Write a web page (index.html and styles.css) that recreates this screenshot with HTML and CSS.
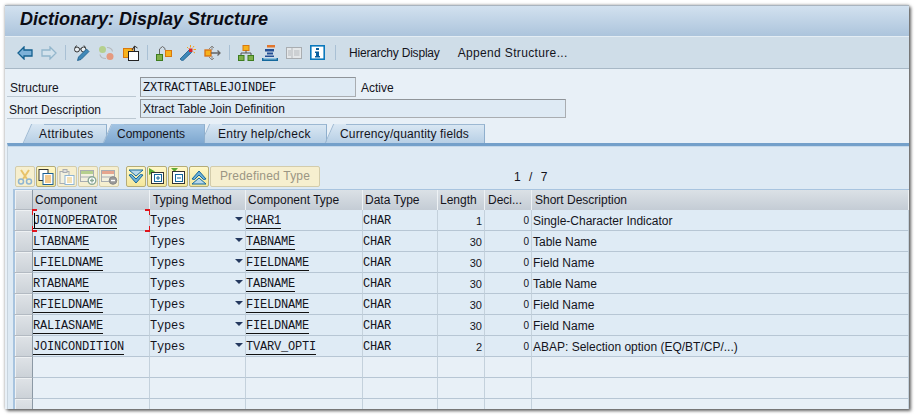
FILE: index.html
```html
<!DOCTYPE html>
<html lang="en">
<head>
  <meta charset="UTF-8" />
  <title>Dictionary: Display Structure</title>
  <link rel="stylesheet" href="styles.css">
</head>
<body>
  <div class="window">
    <div class="titlebar">Dictionary: Display Structure</div>

    <div class="toolbar">
      <svg class="tb-icon first" width="16" height="14" viewBox="0 0 16 14"><path d="M7 1 1 7l6 6V10h8V4H7z" fill="#7db1d8" stroke="#14608f" stroke-width="1.3"/></svg>
      <svg class="tb-icon" width="16" height="14" viewBox="0 0 16 14"><path d="M9 1l6 6-6 6V10H1V4h8z" fill="#d3e2ec" stroke="#93b6cc" stroke-width="1.3"/></svg>
      <span class="sep"></span>
      <svg class="tb-icon" width="16" height="16" viewBox="0 0 16 16"><circle cx="3" cy="4.500" r="2.500" fill="#e8eef2" stroke="#333"/><circle cx="9.500" cy="4.500" r="2.500" fill="#e8eef2" stroke="#333"/><path d="M5.500 4h1.500M1 2.500 2.500 .5M11.500 2.500 10 .5" stroke="#333" fill="none"/><path d="M3.500 15.500l1-3.500 8-8 2.500 2.500-8 8z" fill="#3f88b8" stroke="#1b5b88" stroke-width=".8"/></svg>
      <svg class="tb-icon" width="17" height="16" viewBox="0 0 17 16"><circle cx="4.500" cy="4.500" r="3.500" fill="#b5d08e"/><circle cx="12" cy="11.500" r="3.500" fill="#e59a80"/><path d="M9 2.500c3 0 5 1 5.500 4M8 13.500c-3 0-5.500-1-6-4" fill="none" stroke="#b5b9bd" stroke-width="1.200"/></svg>
      <svg class="tb-icon" width="16" height="16" viewBox="0 0 16 16"><rect x=".5" y="3.500" width="9.500" height="9" fill="#f6b21c" stroke="#d9780f"/><rect x="5.500" y="6.500" width="10" height="9" fill="#fff" stroke="#222"/><path d="M9 5l2.500-4 3 2M11.500 1v5" fill="none" stroke="#333"/></svg>
      <span class="sep"></span>
      <svg class="tb-icon" width="16" height="16" viewBox="0 0 16 16"><rect x=".5" y="9.500" width="6" height="6" fill="#7fb04a" stroke="#3e7d1f"/><rect x="9.500" y="5.500" width="6" height="6" fill="#f6b21c" stroke="#d9780f"/><path d="M3.500 9V4l3-2.500L9 3.500V5" fill="none" stroke="#666"/></svg>
      <svg class="tb-icon" width="16" height="16" viewBox="0 0 16 16"><path d="M0 14 9 5l2.500 2.500-9 8.500z" fill="#3f88b8" stroke="#1b5b88" stroke-width=".8"/><rect x="9" y="3.500" width="3.500" height="3.500" fill="#d8232a"/><path d="M10.500 0v2.500M14 1l-1 1.500M16 4.500h-2.500M15 8l-1.500-1M7 2l1.500 1.500" stroke="#f3a01b"/></svg>
      <svg class="tb-icon" width="17" height="16" viewBox="0 0 17 16"><rect x="1" y="5" width="6" height="6" fill="#f6b21c" stroke="#d96f0f" stroke-width="1.300"/><path d="M7 8h9M13.500 5.500 16 8l-2.500 2.500" fill="none" stroke="#666" stroke-width="1.300"/><path d="M5 4 8 1l2 2M5 12l3 3 2-2M8 1v4M8 15v-4" fill="none" stroke="#888"/></svg>
      <span class="sep"></span>
      <svg class="tb-icon" width="16" height="16" viewBox="0 0 16 16"><rect x="5" y=".5" width="6" height="5" fill="#f6b21c" stroke="#d9780f"/><path d="M8 5.500V8M3 10V8h10v2" fill="none" stroke="#555"/><rect x=".5" y="10.500" width="5.500" height="5" fill="#7fb04a" stroke="#3e7d1f"/><rect x="10" y="10.500" width="5.500" height="5" fill="#7fb04a" stroke="#3e7d1f"/></svg>
      <svg class="tb-icon" width="16" height="16" viewBox="0 0 16 16"><rect x="5" y="0" width="8" height="2.500" fill="#e2762c"/><rect x="3" y="4" width="9" height="2.500" fill="#244f94"/><rect x="5" y="7.500" width="6" height="2" fill="#244f94"/><rect x="3" y="10.500" width="9" height="1.500" fill="#244f94"/><path d="M.7 13v2.300h14.600V13" fill="#8cc0dd" stroke="#14689c" stroke-width="1.400"/></svg>
      <svg class="tb-icon" width="16" height="12" viewBox="0 0 16 12"><rect x=".5" y=".5" width="15" height="11" fill="#e4e7e9" stroke="#a9adb1"/><path d="M6 1v10M2 4h3M2 6h3M2 8h3M8 4h5.500M8 6h5.500M8 8h5.500" stroke="#b5b9bd"/></svg>
      <svg class="tb-icon info" width="15" height="15" viewBox="0 0 15 15"><rect x=".8" y=".8" width="13.400" height="13.400" fill="#fff" stroke="#0a78bd" stroke-width="1.600"/><path d="M6 3h3v2H6zM5 6.500h4V11h1v1.500H5V11h1V8H5z" fill="#0b5f9e"/></svg>
      <span class="sep"></span>
      <span class="tb-text hier">Hierarchy Display</span>
      <span class="tb-text append">Append Structure...</span>
    </div>

    <div class="form">
      <div class="form-row">
        <label class="form-label">Structure</label>
        <span class="field short mono">ZXTRACTTABLEJOINDEF</span>
        <span class="status">Active</span>
      </div>
      <div class="form-row">
        <label class="form-label second">Short Description</label>
        <span class="field long">Xtract Table Join Definition</span>
      </div>
    </div>

    <div class="tabs">
      <div class="tab tab-attr">Attributes</div>
      <div class="tab tab-comp active">Components</div>
      <div class="tab tab-entry">Entry help/check</div>
      <div class="tab tab-curr">Currency/quantity fields</div>
    </div>

    <div class="panel">
      <div class="grid-tools">
        <span class="tool off"><svg width="16" height="16" viewBox="0 0 16 16"><path d="M4 1l6 9M12 1 6 10" stroke="#e8c36a" stroke-width="2" fill="none"/><circle cx="4" cy="12.500" r="2.500" fill="none" stroke="#8fb5d2" stroke-width="1.500"/><circle cx="12" cy="12.500" r="2.500" fill="none" stroke="#8fb5d2" stroke-width="1.500"/></svg></span>
        <span class="tool"><svg width="16" height="16" viewBox="0 0 16 16"><rect x="1" y=".5" width="9" height="11" fill="#fff" stroke="#333"/><rect x="5" y="4.500" width="10" height="11" fill="#fff" stroke="#1a5f94"/><path d="M7 7h6M7 9h6M7 11h6M7 13h6" stroke="#e8951c"/></svg></span>
        <span class="tool off"><svg width="16" height="16" viewBox="0 0 16 16"><rect x="1" y="2.500" width="9" height="12" fill="#f3f1df" stroke="#a9adb1"/><rect x="4" y=".5" width="4" height="3" fill="#ddd" stroke="#a9adb1"/><rect x="6" y="6.500" width="9" height="9" fill="#fff" stroke="#8fb5d2"/><path d="M8 9h5M8 11h5M8 13h5" stroke="#e8c36a"/></svg></span>
        <span class="tool off"><svg width="17" height="16" viewBox="0 0 17 16"><rect x=".5" y="1.500" width="13" height="11" fill="#f3f1df" stroke="#a9adb1"/><rect x="1" y="2" width="12" height="3" fill="#b5cf8e"/><path d="M1 8h12" stroke="#a9adb1"/><circle cx="12" cy="11.500" r="3.800" fill="#fff" stroke="#8aa896" stroke-width="1.400"/><path d="M10 11.500h4M12 9.500v4" stroke="#8aa896" stroke-width="1.400"/></svg></span>
        <span class="tool off gap-after"><svg width="17" height="16" viewBox="0 0 17 16"><rect x=".5" y="1.500" width="13" height="11" fill="#f3f1df" stroke="#a9adb1"/><rect x="1" y="2" width="12" height="3" fill="#e6a58e"/><path d="M1 8h12" stroke="#a9adb1"/><circle cx="12" cy="11.500" r="3.800" fill="#999" stroke="#888"/><path d="M10 11.500h4" stroke="#fff" stroke-width="1.400"/></svg></span>
        <span class="tool"><svg width="16" height="16" viewBox="0 0 16 16"><path d="M1 1h14L8 7z" fill="#b8d8ea" stroke="#14689c"/><path d="M1 6l7 8 7-8-2.500-.5L8 10 3.500 5.500z" fill="#6fb0d6" stroke="#14689c"/></svg></span>
        <span class="tool"><svg width="17" height="17" viewBox="0 0 17 17"><path d="M0 0l6 3.500L0 7z" fill="#5cab33"/><rect x="2.500" y="4.500" width="12" height="11" fill="#fff" stroke="#333"/><rect x="5.500" y="6.500" width="7" height="7" fill="#fff" stroke="#14689c"/><path d="M7 10h4M9 8v4" stroke="#14689c"/></svg></span>
        <span class="tool"><svg width="17" height="17" viewBox="0 0 17 17"><path d="M1 0h7L4.500 4z" fill="#5cab33"/><rect x="2.500" y="3.500" width="12" height="12" fill="#fff" stroke="#333"/><rect x="5.500" y="6.500" width="7" height="7" fill="#fff" stroke="#14689c"/><path d="M7 10h4" stroke="#14689c"/></svg></span>
        <span class="tool"><svg width="16" height="16" viewBox="0 0 16 16"><path d="M1 15h14L8 9z" fill="#b8d8ea" stroke="#14689c"/><path d="M1 10l7-8 7 8-2.500.5L8 6l-4.500 4.500z" fill="#6fb0d6" stroke="#14689c"/></svg></span>
        <span class="tool-btn">Predefined Type</span>
        <span class="pager">1 / 7</span>
      </div>

      <table class="grid">
        <colgroup>
          <col class="c-sel"><col class="c-name"><col class="c-typing"><col class="c-type"><col class="c-data"><col class="c-len"><col class="c-dec"><col>
        </colgroup>
        <thead>
          <tr>
            <th class="sel"></th><th>Component</th><th class="wide">Typing Method</th><th>Component Type</th><th>Data Type</th><th>Length</th><th class="wide">Deci...</th><th class="wide">Short Description</th>
          </tr>
        </thead>
        <tbody>
          <tr>
            <td class="sel"></td>
            <td class="mono focus-cell"><span class="caret"></span><u>JOINOPERATOR</u><i class="corner tl"></i><i class="corner tr"></i><i class="corner bl"></i><i class="corner br"></i></td>
            <td class="mono typing">Types<b class="drop"></b></td><td class="mono"><u>CHAR1</u></td><td class="mono">CHAR</td><td class="num">1</td><td class="num dec">0</td><td class="desc">Single-Character Indicator</td>
          </tr>
          <tr>
            <td class="sel"></td><td class="mono"><u>LTABNAME</u></td><td class="mono typing">Types<b class="drop"></b></td><td class="mono"><u>TABNAME</u></td><td class="mono">CHAR</td><td class="num">30</td><td class="num dec">0</td><td class="desc">Table Name</td>
          </tr>
          <tr>
            <td class="sel"></td><td class="mono"><u>LFIELDNAME</u></td><td class="mono typing">Types<b class="drop"></b></td><td class="mono"><u>FIELDNAME</u></td><td class="mono">CHAR</td><td class="num">30</td><td class="num dec">0</td><td class="desc">Field Name</td>
          </tr>
          <tr>
            <td class="sel"></td><td class="mono"><u>RTABNAME</u></td><td class="mono typing">Types<b class="drop"></b></td><td class="mono"><u>TABNAME</u></td><td class="mono">CHAR</td><td class="num">30</td><td class="num dec">0</td><td class="desc">Table Name</td>
          </tr>
          <tr>
            <td class="sel"></td><td class="mono"><u>RFIELDNAME</u></td><td class="mono typing">Types<b class="drop"></b></td><td class="mono"><u>FIELDNAME</u></td><td class="mono">CHAR</td><td class="num">30</td><td class="num dec">0</td><td class="desc">Field Name</td>
          </tr>
          <tr>
            <td class="sel"></td><td class="mono"><u>RALIASNAME</u></td><td class="mono typing">Types<b class="drop"></b></td><td class="mono"><u>FIELDNAME</u></td><td class="mono">CHAR</td><td class="num">30</td><td class="num dec">0</td><td class="desc">Field Name</td>
          </tr>
          <tr>
            <td class="sel"></td><td class="mono"><u>JOINCONDITION</u></td><td class="mono typing">Types<b class="drop"></b></td><td class="mono"><u>TVARV_OPTI</u></td><td class="mono">CHAR</td><td class="num">2</td><td class="num dec">0</td><td class="desc">ABAP: Selection option (EQ/BT/CP/...)</td>
          </tr>
          <tr class="empty"><td class="sel"></td><td></td><td></td><td></td><td></td><td></td><td></td><td></td></tr>
          <tr class="empty"><td class="sel"></td><td></td><td></td><td></td><td></td><td></td><td></td><td></td></tr>
          <tr class="empty"><td class="sel"></td><td></td><td></td><td></td><td></td><td></td><td></td><td></td></tr>
        </tbody>
      </table>
    </div>
  </div>
</body>
</html>
```

FILE: styles.css
```css
html, body {
  margin: 0;
  height: 100%;
  overflow: hidden;
  background: #fff;
}
body {
  font-family: "Liberation Sans", Arial, sans-serif;
  font-size: 12px;
  color: #14141c;
}
.window {
  width: 904px;
  height: 404px;
  margin: 5px 0 0 5px;
  overflow: hidden;
  background: #e8f0f7;
  box-shadow: 0 0 3px rgba(0,0,0,.35), 2px 2px 3px rgba(0,0,0,.55);
  display: flex;
  flex-direction: column;
}

.titlebar {
  height: 31px;
  line-height: 27px;
  padding-left: 15px;
  background: linear-gradient(#d2e1ef, #acc4dc);
  font-size: 18px;
  font-weight: bold;
  font-style: italic;
  color: #0c0c14;
  box-sizing: border-box;
  border-top: 1px solid #a9b4bf;
  flex: none;
}

.toolbar {
  height: 33px;
  flex: none;
  box-sizing: border-box;
  display: flex;
  align-items: center;
  background: #cfdde8;
  border-top: 1px solid #e4edf4;
  border-bottom: 1px solid #a8b8c6;
}
.tb-icon { margin-right: 8px; flex: none; }
.tb-icon.first { margin-left: 12px; }
.tb-icon.info { margin-right: 10px; }
.sep {
  width: 1px;
  height: 15px;
  margin-right: 8px;
  background: #a9c0d4;
  flex: none;
}
.tb-text.hier { margin-left: 5px; margin-right: 18px; letter-spacing: -.2px; }
.tb-text.append { letter-spacing: .35px; }

.form {
  padding: 8px 0 0 2px;
  flex: none;
}
.form-row {
  display: flex;
  height: 21px;
  align-items: flex-start;
}
.form-row + .form-row { height: 22px; margin-top: 1px; }
.form-label {
  width: 129px;
  padding: 2px 0 0 3px;
  margin-right: 4px;
  box-sizing: border-box;
  height: 20px;
  line-height: 18px;
  border-bottom: 1px solid #bcc8d2;
}
.form-label.second { padding-left: 2px; }
.field {
  box-sizing: border-box;
  height: 20px;
  line-height: 17px;
  padding: 2px 0 0 2px;
  background: #deeaf4;
  border: 1px solid #a9adb1;
  border-top-color: #8f9499;
  border-left-color: #8f9499;
}
.field.short { width: 216px; }
.field.long { width: 426px; height: 19px; padding-top: 1px; }
.status { margin-left: 5px; line-height: 22px; }
.mono {
  font-family: "Liberation Mono", "Courier New", monospace;
  font-size: 12px;
  letter-spacing: -.2px;
}

.tabs {
  display: flex;
  height: 19px;
  margin-top: 3px;
  padding-left: 15px;
  flex: none;
}
.tab {
  position: relative;
  isolation: isolate;
  box-sizing: border-box;
  height: 19px;
  line-height: 19px;
  letter-spacing: .15px;
  background: linear-gradient(#d9e7f3, #b7cfe5);
  border-top: 1px solid #9cb8d2;
  border-right: 1px solid #8fafcd;
  white-space: nowrap;
}
.tab::before {
  content: "";
  position: absolute;
  top: -1px;
  bottom: 0;
  left: -8px;
  width: 12px;
  background: linear-gradient(#d9e7f3, #b7cfe5);
  border-left: 1px solid #9cb8d2;
  transform: skewX(-24deg);
  z-index: -1;
}
.tab-attr { margin-left: 15px; width: 72px; padding-left: 4px; margin-right: 8px; letter-spacing: .4px; }
.tab-comp { width: 90px; padding-left: 2px; margin-right: 8px; z-index: 1; letter-spacing: 0; }
.tab-entry { width: 114px; padding-left: 5px; margin-right: 10px; letter-spacing: .25px; }
.tab-curr { width: 148px; padding-left: 3px; }
.tab.active, .tab.active::before {
  background: linear-gradient(#a3c4e3, #7fa8d0);
}

.panel {
  flex: 1;
  min-height: 0;
  margin-left: 2px;
  padding-left: 5px;
  background: #deeaf4;
  border-top: 3px solid #74a0ca;
  border-left: 1px solid #c8d4de;
  overflow: hidden;
  box-shadow: inset 0 1px 0 #c4d8ea;
}

.grid-tools {
  display: flex;
  align-items: center;
  height: 21px;
  margin-top: 20px;
  padding-left: 2px;
}
.tool {
  box-sizing: border-box;
  width: 20px;
  height: 21px;
  margin-right: 1px;
  display: flex;
  align-items: center;
  justify-content: center;
  background: linear-gradient(#fff8c8, #f4e79c);
  border: 1px solid #b5ac78;
  border-radius: 2px;
  flex: none;
}
.tool.off {
  background: #f6efcf;
  border-color: #d3ccab;
}
.tool.gap-after { margin-right: 7px; }
.tool-btn {
  box-sizing: border-box;
  width: 110px;
  height: 21px;
  line-height: 19px;
  text-align: center;
  color: #9b9684;
  letter-spacing: .2px;
  background: #f6efcf;
  border: 1px solid #d3ccab;
  border-radius: 2px;
  flex: none;
}
.pager {
  margin-left: 194px;
  word-spacing: 5px;
}

.grid {
  table-layout: fixed;
  border-collapse: separate;
  border-spacing: 0;
  width: 896px;
  margin-top: 2px;
  border-top: 1px solid #a8c4df;
}
.c-sel { width: 20px; }
.c-name { width: 117px; }
.c-typing { width: 96px; }
.c-type { width: 117px; }
.c-data { width: 75px; }
.c-len { width: 47px; }
.c-dec { width: 47px; }
.grid th {
  height: 20px;
  padding: 0 0 0 2px;
  text-align: left;
  font-weight: normal;
  white-space: nowrap;
  background: linear-gradient(#dbe1e6, #c4ccd5);
  border-right: 1px solid #eef2f5;
  box-sizing: border-box;
}
.grid th.wide { padding-left: 3px; }
.grid td {
  height: 21px;
  padding: 0;
  box-sizing: border-box;
  background: #dfebf5;
  border-right: 1px solid #c4d1dc;
  border-bottom: 1px solid #b7c6d4;
  white-space: nowrap;
  line-height: 18px;
}
.grid td.mono {
  vertical-align: top;
  padding-top: 4px;
  line-height: 14px;
}
.grid td.desc { padding: 2px 0 0 1px; }
.grid .empty td { background: #e8f0f7; }
.grid td.sel, .grid th.sel {
  padding: 0;
  background: linear-gradient(#dfe3e7, #ccd2d8);
  border-left: 2px solid #a8c4df;
  border-right: 1px solid #8c99a5;
  border-bottom: 1px solid #b3bac2;
  box-shadow: inset 1px 1px 0 #eef1f3;
}
.grid u {
  display: inline-block;
  line-height: 14px;
  vertical-align: top;
  text-decoration: none;
  border-bottom: 1px solid #111;
}
.grid .num {
  text-align: right;
  padding: 2px 2px 0 0;
  font-size: 11px;
}
.grid .dec { font-size: 10px; }
.typing { position: relative; }
.drop {
  position: absolute;
  right: 2px;
  top: 7px;
  width: 0;
  height: 0;
  border-left: 4px solid transparent;
  border-right: 4px solid transparent;
  border-top: 4px solid #24385e;
}
.focus-cell { position: relative; }
.caret {
  position: absolute;
  left: 1px;
  top: 3px;
  width: 1px;
  height: 15px;
  background: #000;
}
.corner {
  position: absolute;
  z-index: 2;
  width: 4px;
  height: 4px;
  border: 0 solid #e0141c;
}
.corner.tl { left: -1px; top: -1px; border-width: 2px 0 0 1px; }
.corner.tr { right: -1px; top: -1px; border-width: 2px 1px 0 0; }
.corner.bl { left: -1px; bottom: -2px; border-width: 0 0 2px 1px; }
.corner.br { right: -1px; bottom: -2px; border-width: 0 1px 2px 0; }
```
